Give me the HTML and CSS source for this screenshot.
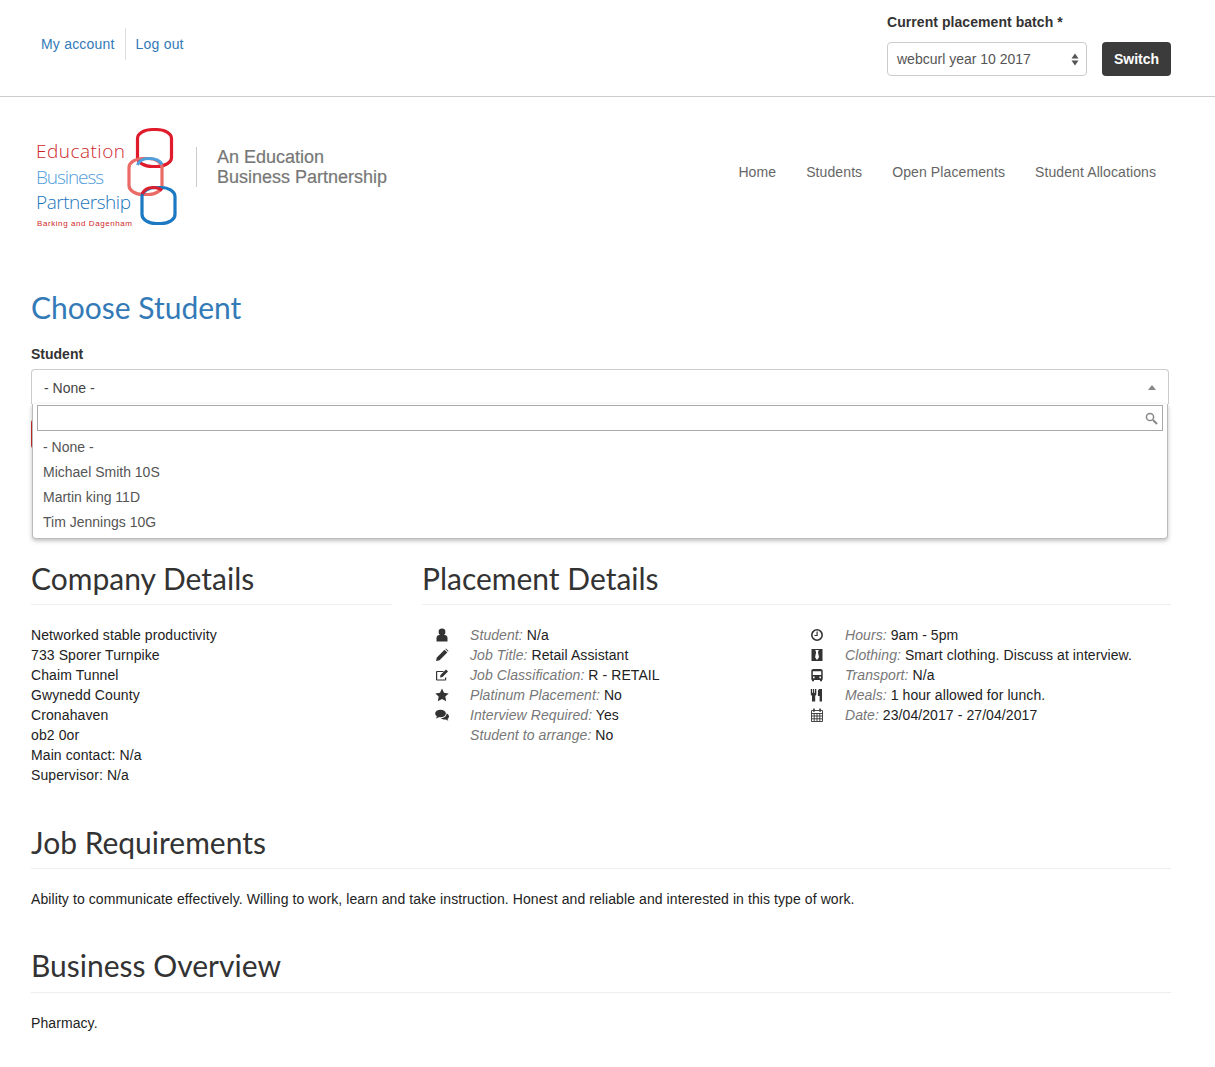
FILE: index.html
```html
<!DOCTYPE html>
<html lang="en">
<head>
<meta charset="utf-8">
<title>Choose Student</title>
<link rel="stylesheet" href="styles.css">
</head>
<body>
<header class="topbar">
  <nav class="account">
    <a href="#" class="account-link">My account</a>
    <a href="#" class="account-link">Log out</a>
  </nav>
  <form class="batch">
    <label class="batch-label">Current placement batch *</label>
    <div class="batch-row">
      <div class="fake-select">
        <span>webcurl year 10 2017</span>
        <svg class="updown" width="8" height="13" viewBox="0 0 8 13"><path d="M4 .5 7.500 5.500H.5zM4 12.500.5 7.500h7z" fill="#555"/></svg>
      </div>
      <button type="button" class="switch">Switch</button>
    </div>
  </form>
</header>

<section class="brand">
  <div class="logo-wrap">
    <svg class="logo" width="149" height="112" viewBox="0 0 149 112">
      <rect x="106.500" y="9.500" width="34" height="37" rx="15" ry="9" fill="none" stroke="#e01b2b" stroke-width="3.200"/>
      <rect x="98" y="38.500" width="33" height="36" rx="14" ry="9" fill="none" stroke="#ea6a66" stroke-width="3.200"/>
      <rect x="111" y="67.500" width="33" height="36" rx="14" ry="9" fill="none" stroke="#1b78c2" stroke-width="3.200"/>
      <path d="M106.500 45C108 41 112 38.500 118 38.500c6 0 11 2 13 6" fill="none" stroke="#4d9fdc" stroke-width="3.200"/>
      <path d="M111 74c2-4 6-6.500 11-6.500 4 0 7 1 9 3" fill="none" stroke="#d8202e" stroke-width="3.200"/>
      <text x="5" y="38" class="logo-t red" textLength="89">Education</text>
      <text x="5" y="64" class="logo-t lblue" textLength="68">Business</text>
      <text x="5" y="89" class="logo-t blue" textLength="95">Partnership</text>
      <text x="6" y="106" class="logo-s" textLength="95">Barking and Dagenham</text>
    </svg>
    <div class="tagline">An Education<br>Business Partnership</div>
  </div>
  <nav class="mainnav">
    <a href="#">Home</a>
    <a href="#">Students</a>
    <a href="#">Open Placements</a>
    <a href="#">Student Allocations</a>
  </nav>
</section>

<main class="content">
  <h1 class="title">Choose Student</h1>
  <label class="field-label">Student</label>
  <div class="chosen">
    <div class="chosen-head"><span>- None -</span><i class="caret"></i></div>
    <div class="drop">
      <div class="search">
        <svg width="13" height="13" viewBox="0 0 13 13"><circle cx="5" cy="5" r="3.600" fill="none" stroke="#888" stroke-width="1.500"/><path d="M8 8l4 4" stroke="#888" stroke-width="2"/></svg>
      </div>
      <ul class="options">
        <li>- None -</li>
        <li>Michael Smith 10S</li>
        <li>Martin king 11D</li>
        <li>Tim Jennings 10G</li>
      </ul>
    </div>
  </div>
  <button type="button" class="choose-btn" aria-label="Choose"></button>

  <div class="columns">
    <section class="company">
      <h2 class="section-title">Company Details</h2>
      <p class="address">Networked stable productivity<br>733 Sporer Turnpike<br>Chaim Tunnel<br>Gwynedd County<br>Cronahaven<br>ob2 0or<br>Main contact: N/a<br>Supervisor: N/a</p>
    </section>
    <section class="placement">
      <h2 class="section-title">Placement Details</h2>
      <div class="details">
        <ul class="facts">
          <li><svg class="ic" viewBox="0 0 14 14"><circle cx="7" cy="4" r="3.400"/><path d="M1.500 13.500V10c0-2 1.500-3 3-3h5c1.500 0 3 1 3 3v3.500z"/></svg><span><em>Student:</em> N/a</span></li>
          <li><svg class="ic" viewBox="0 0 14 14"><path d="M1 13l.8-3.600L9.500 1.700l2.800 2.800-7.700 7.700zM10.300 1l.7-.5 2.500 2.500-.5.700z"/></svg><span><em>Job Title:</em> Retail Assistant</span></li>
          <li><svg class="ic" viewBox="0 0 14 14"><path d="M10 10v1.500H2.200V4H8l1-1H2a1 1 0 0 0-1 1v7.500a1 1 0 0 0 1 1h8.200a1 1 0 0 0 1-1V9z"/><path d="M5 9.500l.5-2.500L11 1.500 13 3.500 7.500 9z"/></svg><span><em>Job Classification:</em> R - RETAIL</span></li>
          <li><svg class="ic" viewBox="0 0 14 14"><path d="M7 .5l2 4.300 4.700.6-3.400 3.200.9 4.700L7 11l-4.200 2.300.9-4.700L.3 5.400 5 4.800z"/></svg><span><em>Platinum Placement:</em> No</span></li>
          <li><svg class="ic" viewBox="0 0 14 14"><ellipse cx="5.500" cy="5.500" rx="5.300" ry="3.800"/><path d="M2 8l-1 2.500L4.500 9z"/><path d="M11.500 5.500c1.500.6 2.500 1.700 2.500 3 0 1-.6 1.800-1.500 2.400l.8 1.800-2.600-1.200c-1.500.2-3.700-.2-4.700-1.500 3.500 0 5.700-2 5.500-4.500z"/></svg><span><em>Interview Required:</em> Yes</span></li>
          <li><span class="ic"></span><span><em>Student to arrange:</em> No</span></li>
        </ul>
        <ul class="facts">
          <li><svg class="ic" viewBox="0 0 14 14"><circle cx="7" cy="7" r="5.200" fill="none" stroke="#333" stroke-width="1.600"/><path d="M6.500 3.500h1.200V8H4.500V7h2z"/></svg><span><em>Hours:</em> 9am - 5pm</span></li>
          <li><svg class="ic" viewBox="0 0 14 14"><path fill-rule="evenodd" d="M1.500 1h11v12h-11zM5.200 2l.9 2.200-1 5L7 12l2-2.800-1-5L8.800 2z"/></svg><span><em>Clothing:</em> Smart clothing. Discuss at interview.</span></li>
          <li><svg class="ic" viewBox="0 0 14 14"><path fill-rule="evenodd" d="M3.500 1h7c1.300 0 2.200.7 2.200 1.800V11c0 .5-.3.900-.7 1v1.300h-2V12H4v1.300H2V12c-.4-.1-.7-.5-.7-1V2.800C1.300 1.700 2.200 1 3.500 1zM2.800 3.200V7h8.400V3.200zM3 8.600v1.600h1.600V8.600zM9.400 8.600v1.600H11V8.600z"/></svg><span><em>Transport:</em> N/a</span></li>
          <li><svg class="ic" viewBox="0 0 14 14"><path d="M.8 1h1.400v3.800h.8V1h1.200v3.800h.8V1h1.300v5.200c0 .7-.5 1.200-1.100 1.400v5.900H2V7.600C1.300 7.400.8 6.900.8 6.200zM9.500 1H12v12.500H9.600V8H7.900V3.500C7.900 2 8.800 1.300 9.500 1z"/></svg><span><em>Meals:</em> 1 hour allowed for lunch.</span></li>
          <li><svg class="ic" viewBox="0 0 14 14"><path d="M1.500 2.500h11v11h-11zM1.500 5.500h11M1.500 8h11M1.500 10.800h11M4.200 5.500v8M7 5.500v8M9.800 5.500v8" fill="none" stroke="#333" stroke-width=".9"/><path d="M3.200.5h1.500v3.200H3.200zM9.300.5h1.500v3.200H9.300z"/></svg><span><em>Date:</em> 23/04/2017 - 27/04/2017</span></li>
        </ul>
      </div>
    </section>
  </div>

  <section class="block">
    <h2 class="section-title">Job Requirements</h2>
    <p class="para">Ability to communicate effectively. Willing to work, learn and take instruction. Honest and reliable and interested in this type of work.</p>
  </section>
  <section class="block">
    <h2 class="section-title overview">Business Overview</h2>
    <p class="para">Pharmacy.</p>
  </section>
</main>
</body>
</html>
```
FILE: styles.css
```css
* { box-sizing: border-box; }
html, body { margin: 0; padding: 0; }
body {
  font-family: "Liberation Sans", Arial, sans-serif;
  font-size: 14px;
  line-height: 20px;
  letter-spacing: .1px;
  color: #333;
  background: #fff;
}
a { text-decoration: none; color: inherit; }
ul { list-style: none; margin: 0; padding: 0; }

.topbar {
  height: 97px;
  border-bottom: 1px solid #ccc;
  padding: 12px 44px 0 41px;
  display: flex;
  justify-content: space-between;
}
.account { display: flex; margin-top: 16px; height: 32px; letter-spacing: .2px; }
.account-link {
  color: #337ab7;
  line-height: 32px;
  padding-right: 10px;
  margin-right: 10px;
  border-right: 1px solid #ddd;
}
.account-link:last-child { border-right: 0; }
.batch { width: 284px; }
.batch-label { display: block; font-weight: 700; margin-bottom: 10px; letter-spacing: .06px; }
.batch-row { display: flex; gap: 15px; }
.fake-select {
  width: 200px;
  height: 34px;
  border: 1px solid #ccc;
  border-radius: 4px;
  padding: 0 7px 0 9px;
  display: flex;
  align-items: center;
  justify-content: space-between;
  color: #555;
  letter-spacing: 0;
}
.switch {
  width: 69px;
  height: 34px;
  border: 0;
  border-radius: 4px;
  background: #3b3b3b;
  color: #fff;
  font: 700 14px "Liberation Sans", Arial, sans-serif;
}

.brand {
  height: 190px;
  padding: 23px 59px 0 31px;
  display: flex;
  justify-content: space-between;
  letter-spacing: 0;
}
.logo-wrap { display: flex; align-items: flex-start; }
.logo { display: block; }
.logo-t { font: 300 19px "Open Sans", "Liberation Sans", sans-serif; }
.red { fill: #d01f2a; }
.lblue { fill: #4f9ddb; }
.blue { fill: #1a75bd; }
.logo-s { font: 8px "Liberation Sans", sans-serif; fill: #d01f2a; }
.tagline {
  margin: 27px 0 0 16px;
  padding-left: 20px;
  border-left: 1px solid #ccc;
  height: 40px;
  font-size: 18px;
  line-height: 20px;
  color: #777;
  -webkit-text-stroke: .2px #777;
}
.mainnav { display: flex; gap: 30px; margin-top: 42px; color: #666; letter-spacing: .1px; }

.content { padding: 0 44px 0 31px; }
.title {
  margin: 0 0 17px;
  font: 400 30px/40px Lato, sans-serif;
  letter-spacing: 0;
  color: #337ab7;
}
.field-label { display: block; font-weight: 700; height: 25px; letter-spacing: 0; }
.chosen { position: relative; width: 1138px; letter-spacing: 0; }
.chosen-head {
  height: 35px;
  border: 1px solid #ccc;
  border-bottom: 0;
  border-radius: 4px 4px 0 0;
  padding: 8px 12px;
  display: flex;
  justify-content: space-between;
  color: #444;
}
.caret {
  margin: 7px 0 0;
  width: 0;
  height: 0;
  border: 4px solid transparent;
  border-top: 0;
  border-bottom: 5px solid #888;
}
.drop {
  position: absolute;
  z-index: 5;
  top: 35px;
  left: 1px;
  width: 1136px;
  height: 135px;
  background: #fff;
  border: 1px solid #bbb;
  border-top: 0;
  border-radius: 0 0 4px 4px;
  box-shadow: 0 2px 4px rgba(0,0,0,.25);
  padding: 1px 4px 0;
  color: #555;
}
.search {
  height: 26px;
  border: 1px solid #aaa;
  display: flex;
  justify-content: flex-end;
  align-items: center;
  padding-right: 4px;
}
.options { margin: 4px -4px 0; padding-left: 10px; }
.options li { height: 25px; line-height: 25px; }
.choose-btn {
  display: block;
  margin-top: 15px;
  width: 80px;
  height: 30px;
  background: #c9302c;
  border: 0;
  border-radius: 4px;
}

.columns { display: flex; gap: 30px; margin-top: 113px; padding-bottom: 1px; }
.company { width: 361px; flex: none; }
.placement { flex: 1; min-width: 0; }
.section-title {
  margin: 0 0 20px;
  padding-bottom: 9px;
  border-bottom: 1px solid #eee;
  font: 400 30px/33px Lato, sans-serif;
  letter-spacing: 0;
  color: #333;
}
.overview { padding-bottom: 10px; }
.address { margin: 0; color: #222; }
.details { display: flex; padding-left: 13px; }
.facts { width: 375px; flex: none; color: #222; letter-spacing: .08px; }
.facts li { display: flex; align-items: center; height: 20px; }
.facts em { color: #777; }
.ic { width: 14px; height: 14px; margin-right: 21px; fill: #333; flex: none; }
.block { margin-top: 40px; }
.para { margin: 0; color: #222; letter-spacing: .085px; }
```
